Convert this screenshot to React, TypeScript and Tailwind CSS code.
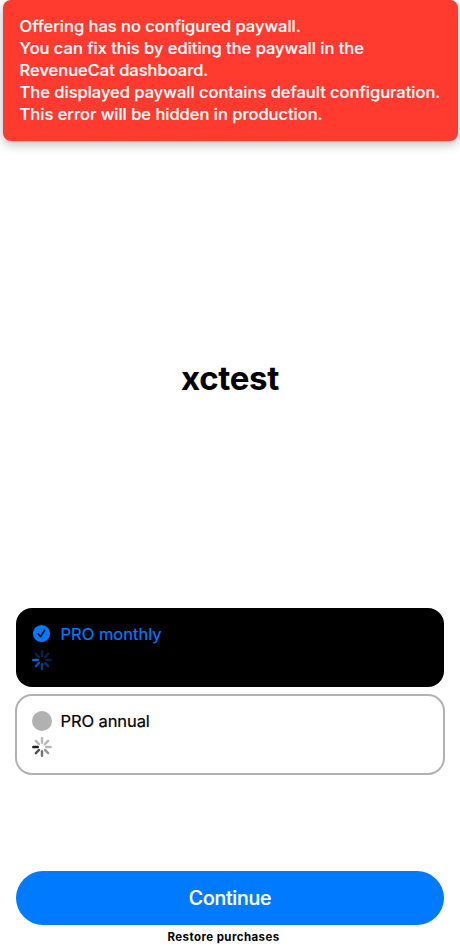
import React from "react";

const errorLines = [
  "Offering has no configured paywall.",
  "You can fix this by editing the paywall in the",
  "RevenueCat dashboard.",
  "The displayed paywall contains default configuration.",
  "This error will be hidden in production.",
];

// Opacity of each spoke, clockwise from the top.
const spokes = [0.28, 0.28, 0.28, 0.4, 0.55, 0.68, 0.88, 0.28];

function Spinner({ className, opacities }: { className: string; opacities: number[] }) {
  return (
    <svg viewBox="0 0 20 20" className={`block h-5 w-5 ${className}`} stroke="currentColor" strokeWidth="2.4" strokeLinecap="round">
      {opacities.map((o, i) => (
        <line key={i} x1="10" y1="1.3" x2="10" y2="5.8" opacity={o} transform={`rotate(${i * 45} 10 10)`} />
      ))}
    </svg>
  );
}

export default function App() {
  return (
    <main className="flex h-[950px] w-[460px] flex-col overflow-hidden bg-white font-['Inter','Liberation_Sans',sans-serif] text-black">
      <section className="ml-[3px] h-[141px] w-[455px] shrink-0 rounded-[8px] bg-[#ff3b30] pt-[15px] pl-[16.6px] text-[16.5px] leading-[22px] font-medium tracking-[-0.015px] whitespace-nowrap text-white shadow-[0_3px_12px_rgba(0,0,0,0.27)] [-webkit-text-stroke:0.15px_currentColor]">
        {errorLines.map((line) => (
          <p key={line}>{line}</p>
        ))}
      </section>

      <div className="flex h-[467px] shrink-0 items-center justify-center pt-[7px]">
        <h1 className="text-[33px] leading-[40px] font-bold tracking-[-0.3px]">xctest</h1>
      </div>

      <div className="flex shrink-0 flex-col gap-[7px] px-[15px]">
        <section className="mx-px flex h-[79px] flex-col rounded-[16px] bg-black pt-4 pl-4 text-[#007aff]">
          <div className="flex h-5 items-center gap-[8.5px]">
            <svg viewBox="0 0 20 20" className="h-5 w-5">
              <circle cx="9.5" cy="9.5" r="8.6" fill="currentColor" />
              <path d="M6.2 9.9 8.5 12.6 12.7 6.3" fill="none" stroke="black" strokeWidth="1.6" strokeLinecap="round" strokeLinejoin="round" />
            </svg>
            <span className="text-[16.5px] leading-5 [-webkit-text-stroke:0.2px_currentColor]">PRO monthly</span>
          </div>
          <div className="mt-[6px]">
            <Spinner className="text-[#007aff]" opacities={spokes} />
          </div>
        </section>

        <section className="flex h-[81px] flex-col rounded-[17px] border-2 border-[#b1b1b1] pt-[15px] pl-[15px]">
          <div className="flex h-5 items-center gap-[8.5px]">
            <span className="h-5 w-5 rounded-full bg-[#b1b1b1]" />
            <span className="text-[16.5px] leading-5 tracking-[-0.1px] [-webkit-text-stroke:0.2px_currentColor]">PRO annual</span>
          </div>
          <div className="mt-[6px]">
            <Spinner className="text-black" opacities={spokes} />
          </div>
        </section>
      </div>

      <button className="mx-4 mt-24 h-[54px] shrink-0 rounded-full bg-[#007aff] pt-[2px] text-[19.5px] font-medium tracking-[-0.25px] text-white [-webkit-text-stroke:0.2px_currentColor]">Continue</button>
      <button className="mt-1 mr-[13px] shrink-0 text-center text-[11.5px] leading-4 font-bold tracking-[0.42px]">Restore purchases</button>
    </main>
  );
}
